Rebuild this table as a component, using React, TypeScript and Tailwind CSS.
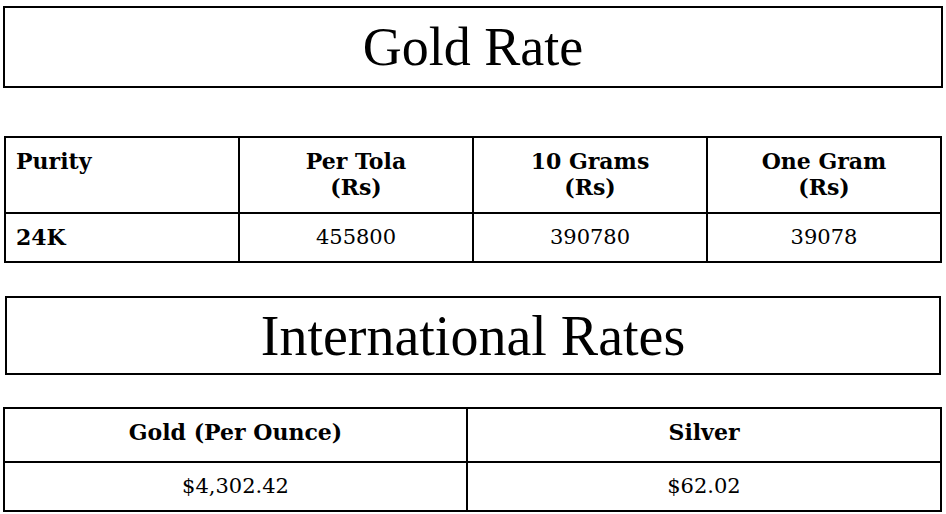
export default function App() {
  const cell = "border-2 border-black align-top px-[10px] py-[10px] leading-[26px]";
  return (
    <div className="w-[946px] h-[514px] bg-white text-black overflow-hidden pt-[6px]">
      <div className="mx-[3px] h-[82px] border-2 border-black flex items-center justify-center">
        <h1 className="text-[54px] leading-none" style={{ fontFamily: '"Liberation Serif", serif' }}>Gold Rate</h1>
      </div>
      <table
        className="mt-[48px] ml-[4px] w-[938px] border-collapse table-fixed text-[21px]"
        style={{ fontFamily: '"DejaVu Serif", serif' }}
      >
        <thead>
          <tr className="h-[76px]">
            <th className={`${cell} text-left font-bold text-[22px]`}>Purity</th>
            <th className={`${cell} text-center font-bold text-[22px]`}>Per Tola<br />(Rs)</th>
            <th className={`${cell} text-center font-bold text-[22px]`}>10 Grams<br />(Rs)</th>
            <th className={`${cell} text-center font-bold text-[22px]`}>One Gram<br />(Rs)</th>
          </tr>
        </thead>
        <tbody>
          <tr className="h-[49px]">
            <td className={`${cell} align-middle text-left font-bold text-[22px]`}>24K</td>
            <td className={`${cell} align-middle text-center`}>455800</td>
            <td className={`${cell} align-middle text-center`}>390780</td>
            <td className={`${cell} align-middle text-center`}>39078</td>
          </tr>
        </tbody>
      </table>
      <div className="mt-[33px] mx-[5px] h-[79px] border-2 border-black flex items-center justify-center">
        <h1 className="text-[56px] leading-none" style={{ fontFamily: '"Liberation Serif", serif' }}>International Rates</h1>
      </div>
      <table
        className="mt-[32px] ml-[3px] w-[939px] border-collapse table-fixed text-[21px]"
        style={{ fontFamily: '"DejaVu Serif", serif' }}
      >
        <colgroup>
          <col className="w-[463px]" />
          <col />
        </colgroup>
        <thead>
          <tr className="h-[54px]">
            <th className={`${cell} align-middle text-center font-bold text-[22px]`}>Gold (Per Ounce)</th>
            <th className={`${cell} align-middle text-center font-bold text-[22px]`}>Silver</th>
          </tr>
        </thead>
        <tbody>
          <tr className="h-[49px]">
            <td className={`${cell} align-middle text-center`}>$4,302.42</td>
            <td className={`${cell} align-middle text-center`}>$62.02</td>
          </tr>
        </tbody>
      </table>
    </div>
  );
}
